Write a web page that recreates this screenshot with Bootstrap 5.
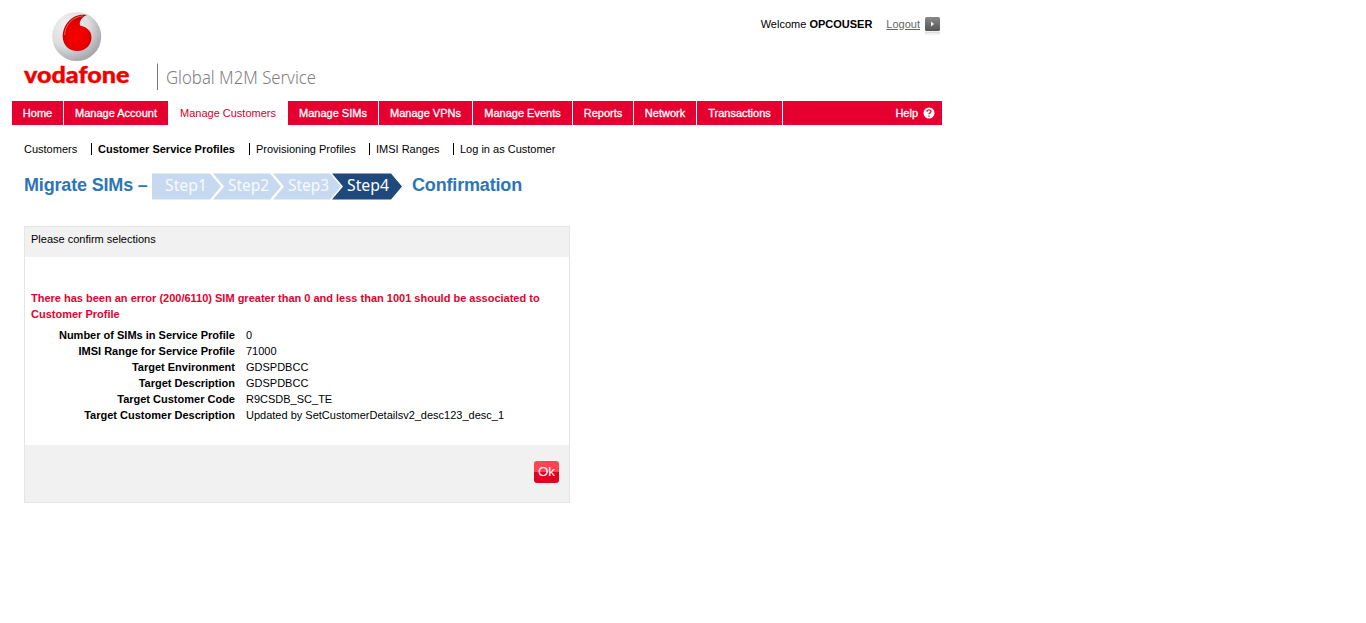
<!DOCTYPE html>
<html lang="en">
<head>
<meta charset="utf-8">
<meta name="viewport" content="width=device-width, initial-scale=1">
<title>Migrate SIMs</title>
<link rel="stylesheet" href="https://cdn.jsdelivr.net/npm/bootstrap@5.3.0/dist/css/bootstrap.min.css">
<style>
body{font-family:"Liberation Sans",Arial,sans-serif;font-size:11px;line-height:16px;color:#000;background:#fff}
.page{width:930px;margin-left:12px}
.masthead{height:101px}
.user-bar{padding:16px 2px 0 0}
.logout{color:#666;margin:0 5px 0 14px}
.main-nav{height:24px;background:#e60030}
.main-nav .nav-link{color:#fff;padding:4px 0;width:var(--w);text-align:center;border-right:1px solid #fff;border-radius:0;line-height:16px;font-size:11px;-webkit-text-stroke:.3px #fff}
.main-nav .nav-link.active{background:#fff;color:#d6002c;border:0;-webkit-text-stroke:0}
.main-nav .before-active{border-right:0}
.help{color:#fff;padding-right:7px;gap:5px;-webkit-text-stroke:.3px #fff}
.sub-nav{padding:16px 0 0 12px;height:41px}
.sub-nav a{color:#000;text-decoration:none;line-height:16px;white-space:nowrap;height:16px;width:var(--w)}
.sub-nav a+a{border-left:1px solid #000;padding-left:6px;height:12px;line-height:12px;margin-top:2px}
.title-row{height:34px;padding-left:12px;color:#2e75b5;font-weight:bold;font-size:18px;line-height:22px;letter-spacing:-.17px}
.title-row svg{letter-spacing:0}
.confirm{width:546px;height:277px;margin:26px 0 0 12px;border:1px solid #e5e5e5;border-radius:0}
.confirm .card-header{height:30px;padding:4px 6px;background:#f1f1f1;border:0;border-radius:0}
.confirm .card-body{padding:33px 6px 0}
.confirm .card-footer{height:57px;background:#f1f1f1;border:0;border-radius:0;padding:16px 10px}
.error{color:#e60030;font-weight:bold;margin-bottom:5px}
.details dt{width:204px;text-align:right;margin-right:11px}
.details dd{margin:0}
.ok{width:25px;height:22px;padding:0;border:0;border-radius:3px;color:#fff;font-size:13.33px;line-height:22px;background:linear-gradient(#ff4355 0 50%,#e60020 50%)}
.ok:hover{color:#fff}
</style>
</head>
<body>
<div class="page">
<header class="masthead d-flex justify-content-between align-items-start">
<svg width="320" height="100" viewBox="12 0 320 100" role="img" aria-label="vodafone Global M2M Service">
<defs>
<radialGradient id="silver" cx=".32" cy=".28" r=".85"><stop offset="0" stop-color="#f4f4f4"/><stop offset=".5" stop-color="#dddcde"/><stop offset="1" stop-color="#98969c"/></radialGradient>
<radialGradient id="red" cx=".5" cy=".6" r=".6"><stop offset="0" stop-color="#fa0000"/><stop offset=".65" stop-color="#e60000"/><stop offset="1" stop-color="#b00000"/></radialGradient>
</defs>
<circle cx="76.700" cy="36.500" r="24.500" fill="url(#silver)"/>
<path d="M87 15C73 12.500 62.700 24 62.700 36.500C62.700 45 69 51 77.300 51C86 51 91.500 44.500 91.500 37.500C91.500 31 87 27 80 25.500C79 21 82 17 87 15Z" fill="url(#red)"/>
<path d="M83 15.900C73 16.500 65 25 64.600 35" fill="none" stroke="#ff9a9a" stroke-width=".9" opacity=".7"/>
<text x="24" y="83" textLength="105.500" lengthAdjust="spacingAndGlyphs" font-family="Lato,sans-serif" font-weight="900" font-size="23.500" fill="#f00000" stroke="#f00000" stroke-width=".4">vodafone</text>
<path d="M157.500 63.500V90" stroke="#777"/>
<text x="166" y="83.500" textLength="150" lengthAdjust="spacingAndGlyphs" font-family="'Noto Sans',sans-serif" font-weight="300" font-size="18" fill="#808080">Global M2M Service</text>
</svg>
<div class="user-bar d-flex">
<span>Welcome <b>OPCOUSER</b></span><a href="#" class="logout">Logout</a>
<svg width="15" height="19" viewBox="0 0 15 19"><defs><linearGradient id="g" x2="0" y2="1"><stop stop-color="#888"/><stop offset="1" stop-color="#555"/></linearGradient></defs><rect y="1" width="15" height="14" rx="1.500" fill="url(#g)"/><path d="M6 5.500v5l3-2.500z" fill="#fff"/><path d="M0 16.500h15" stroke="#ddd" stroke-width="2"/><path d="M0 18.500h15" stroke="#f3f3f3"/></svg>
</div>
</header>
<nav class="main-nav nav flex-nowrap">
<a class="nav-link" style="--w:52px" href="#">Home</a>
<a class="nav-link before-active" style="--w:104px" href="#">Manage Account</a>
<a class="nav-link active" style="--w:120px" href="#">Manage Customers</a>
<a class="nav-link" style="--w:91px" href="#">Manage SIMs</a>
<a class="nav-link" style="--w:94px" href="#">Manage VPNs</a>
<a class="nav-link" style="--w:100px" href="#">Manage Events</a>
<a class="nav-link" style="--w:61px" href="#">Reports</a>
<a class="nav-link" style="--w:63px" href="#">Network</a>
<a class="nav-link" style="--w:86px" href="#">Transactions</a>
<div class="help ms-auto d-flex align-items-center"><span>Help</span><svg width="12" height="12" viewBox="0 0 12 12"><circle cx="6" cy="6" r="5.500" fill="#fff"/><path d="M4 4.700C4 2.300 8 2.300 8 4.500C8 5.800 6 5.900 6 7.300M6 8.400V9.700" fill="none" stroke="#dc2030" stroke-width="1.400"/></svg></div>
</nav>
<nav class="sub-nav d-flex">
<a href="#" style="--w:67px">Customers</a>
<a href="#" class="fw-bold" style="--w:158px">Customer Service Profiles</a>
<a href="#" style="--w:120px">Provisioning Profiles</a>
<a href="#" style="--w:84px">IMSI Ranges</a>
<a href="#" style="--w:110px">Log in as Customer</a>
</nav>
<div class="title-row d-flex align-items-start">
<span style="width:128px" class="pt-2 text-nowrap">Migrate SIMs –</span>
<svg class="flex-shrink-0" width="250" height="34" viewBox="152 166 250 34" font-family="'Noto Sans',sans-serif" font-size="15.500" font-weight="400">
<g fill="#c6d9f1"><path d="M152 173.500H210L221 186.500L210 199.500H152Z"/><path d="M213 173.500H270L281 186.500L270 199.500H213L224 186.500Z"/><path d="M273 173.500H330L341 186.500L330 199.500H273L284 186.500Z"/></g>
<path d="M332 173.500H391L402 186.500L391 199.500H332L343 186.500Z" fill="#1f497d"/>
<g fill="#f7faff"><text x="165" y="191" textLength="42" lengthAdjust="spacingAndGlyphs">Step1</text><text x="228" y="191" textLength="41" lengthAdjust="spacingAndGlyphs">Step2</text><text x="288" y="191" textLength="41" lengthAdjust="spacingAndGlyphs">Step3</text><text x="347" y="191" textLength="42" lengthAdjust="spacingAndGlyphs" fill="#fff">Step4</text></g>
</svg>
<span class="pt-2 text-nowrap" style="margin-left:10px">Confirmation</span>
</div>
<section class="card confirm">
<div class="card-header">Please confirm selections</div>
<div class="card-body">
<div class="error">There has been an error (200/6110) SIM greater than 0 and less than 1001 should be associated to Customer Profile</div>
<dl class="details mb-0">
<div class="d-flex"><dt>Number of SIMs in Service Profile</dt><dd>0</dd></div>
<div class="d-flex"><dt>IMSI Range for Service Profile</dt><dd>71000</dd></div>
<div class="d-flex"><dt>Target Environment</dt><dd>GDSPDBCC</dd></div>
<div class="d-flex"><dt>Target Description</dt><dd>GDSPDBCC</dd></div>
<div class="d-flex"><dt>Target Customer Code</dt><dd>R9CSDB_SC_TE</dd></div>
<div class="d-flex"><dt>Target Customer Description</dt><dd>Updated by SetCustomerDetailsv2_desc123_desc_1</dd></div>
</dl>
</div>
<div class="card-footer d-flex justify-content-end"><button class="btn ok" type="button">Ok</button></div>
</section>
</div>
<script src="https://cdn.jsdelivr.net/npm/bootstrap@5.3.0/dist/js/bootstrap.bundle.min.js"></script>
</body>
</html>
